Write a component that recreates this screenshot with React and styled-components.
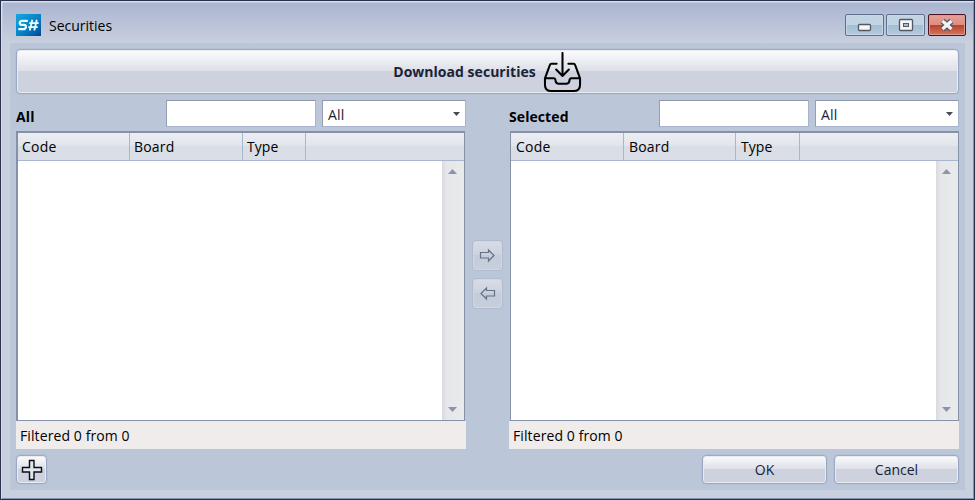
import React from "react";
import styled, { createGlobalStyle, css } from "styled-components";

const Global = createGlobalStyle`
  * { box-sizing: border-box; }
  body { margin: 0; overflow: hidden; background: #2b3349; }
  button, input { font: inherit; margin: 0; padding: 0; }
`;

const Window = styled.div`
  width: 975px;
  height: 500px;
  padding: 0 8px 8px 9px;
  border: 1px solid #29304a;
  background: linear-gradient(#a9b4cf 0, #c8cfde 42px, #c8cfde 100%);
  box-shadow: inset 1px 1px 0 #d9deeb, inset -1px -1px 0 #8294b4, inset 2px 2px 0 #c3cadd;
  font-family: "Open Sans", "Noto Sans", sans-serif;
  font-size: 14px;
  line-height: 20px;
  color: #000;
`;

const TitleBar = styled.header`
  display: flex;
  align-items: flex-start;
  height: 42px;
  margin-right: -1px;
  padding: 12px 0 0 6px;
`;

const Label = styled.span`
  display: inline-block;
  white-space: nowrap;
  letter-spacing: ${(p) => p.$track || 0}px;
  font-weight: ${(p) => (p.$bold ? 700 : 400)};
`;

const Title = styled.h1`
  flex: 1;
  margin: 3px 0 0 8px;
  font-size: inherit;
  font-weight: 400;
  line-height: 20px;
`;

const Logo = styled.svg`
  width: 25px;
  height: 22px;
  margin-top: 1px;
`;

const Controls = styled.div`
  display: flex;
  gap: 2px;
  margin: 1px 1px 0 0;
`;

const ControlButton = styled.button`
  display: block;
  width: 39px;
  height: 22px;
  border: 1px solid #5d708f;
  border-radius: 2px;
  box-shadow: inset 0 0 0 1px #c6d7e7;
  background: linear-gradient(#c2d3e3 0 50%, #a3bdd2 50%, #b4cbdd 100%);
  svg { display: block; width: 37px; height: 20px; }
  ${(p) => p.$close && css`
    border-color: #4c1420;
    width: 38px;
    margin-left: 1px;
    box-shadow: inset 0 0 0 1px #dc998f;
    background: linear-gradient(#e5a197 0, #dc8c80 50%, #b94029 50%, #d4765e 100%);
    svg { width: 36px; }
  `}
`;

const Body = styled.main`
  height: 447px;
  padding: 6px 0 6px 6px;
  width: 955px;
  background: #bbc7d9;
`;

const PushButton = styled.button`
  display: flex;
  align-items: center;
  justify-content: center;
  width: ${(p) => p.$w}px;
  height: ${(p) => p.$h}px;
  border: 1px solid #9ca9c4;
  border-radius: 4px;
  color: #1a2238;
  background: linear-gradient(#fcfcfd 0, #dcdfe7 50%, #cdd2df 50%, #cdd2de 100%);
  box-shadow: inset 0 0 0 1px #e9ebf1, 0 0 0 0.5px #aeb9ce;
  ${(p) => p.$dim && css`
    border-color: #b0bbd0;
    background: linear-gradient(#d8dde7, #cbd1de 50%, #c4cbd9 50%, #c7cedc);
    box-shadow: inset 0 0 0 1px #d1d8e4;
  `}
`;

const Inbox = styled.svg`
  width: 39px;
  height: 41px;
  margin: 1px 0 0 7px;
`;

const Columns = styled.div`
  display: grid;
  grid-template-columns: 450px 43px 450px;
  height: 355px;
`;

const Panel = styled.section`
  padding-top: 6px;
`;

const FilterRow = styled.div`
  display: flex;
  height: 27px;
`;

const Heading = styled.h2`
  width: 150px;
  margin: 7px 0 0;
  font-size: inherit;
  line-height: 20px;
`;

const TextInput = styled.input`
  width: 150px;
  height: 27px;
  border: 1px solid #a9b5cc;
  border-top-color: #8c98ae;
  border-left-color: #929eb5;
  background: #fff;
  outline: none;
`;

const Combo = styled.div`
  display: flex;
  justify-content: space-between;
  width: 144px;
  height: 27px;
  margin-left: 6px;
  padding: 4px 5px 0 5px;
  border: 1px solid #a9b5cc;
  border-top-color: #8c98ae;
  border-left-color: #929eb5;
  background: #fff;
  color: #1a2238;
  svg { width: 7px; height: 4px; margin-top: 7px; }
`;

const Table = styled.div`
  display: flex;
  flex-direction: column;
  width: 449px;
  height: 290px;
  margin: 4px 0 0 ${(p) => (p.$shift ? 1 : 0)}px;
  border: solid #8491a7;
  border-width: 2px 1px 1px ${(p) => (p.$shift ? 1 : 2)}px;
  background: #fff;
`;

const HeaderRow = styled.div`
  display: grid;
  grid-template-columns: ${(p) => p.$cols};
  height: 28px;
  border-bottom: 1px solid #aab6cd;
  background: linear-gradient(#eceef3 0, #e1e4eb 50%, #d9dde6 50%, #d9dee7 100%);
`;

const HeaderCell = styled.div`
  padding: 4px 0 0 ${(p) => p.$pad}px;
  border-right: 1px solid #aab6cd;
  &:last-child { border-right: 0; }
`;

const TableBody = styled.div`
  display: flex;
  flex: 1;
  justify-content: flex-end;
`;

const ScrollBar = styled.div`
  display: flex;
  flex-direction: column;
  justify-content: space-between;
  align-items: center;
  width: 22px;
  padding: 8px 1px 8px 0;
  background: linear-gradient(90deg, #d9dbdf 0, #e6e7e9 5px, #e9eaeb 100%);
  svg { width: 9px; height: 5px; }
`;

const Status = styled.div`
  height: 28px;
  padding: 5px 0 0 4px;
  background: #f0eceb;
`;

const Transfer = styled.div`
  display: flex;
  flex-direction: column;
  gap: 7px;
  padding: 146px 0 0 6px;
`;

const Footer = styled.footer`
  display: flex;
  gap: 7px;
  margin-top: 6px;
  > :nth-child(2) { margin-left: 648px; }
`;

const Glyph = styled.svg`
  display: block;
  width: ${(p) => p.$size}px;
  height: ${(p) => p.$size}px;
  fill: none;
`;

const columns = [["Code", 0.2], ["Board", 0.2], ["Type", 0.05]];

function SecuritiesPanel({ title, track, cols, pad, shift }) {
  return (
    <Panel>
      <FilterRow>
        <Heading><Label $bold $track={track}>{title}</Label></Heading>
        <TextInput aria-label={title} />
        <Combo>
          <Label $track={0.2}>All</Label>
          <svg viewBox="0 0 7 4"><path d="M0 0h7L3.5 4z" fill="#464a54" /></svg>
        </Combo>
      </FilterRow>
      <Table $shift={shift}>
        <HeaderRow $cols={cols}>
          {columns.map(([name, t]) => (
            <HeaderCell key={name} $pad={pad}><Label $track={t}>{name}</Label></HeaderCell>
          ))}
          <HeaderCell />
        </HeaderRow>
        <TableBody>
          <ScrollBar>
            <svg viewBox="0 0 9 5"><path d="M0 5h9L4.5 0z" fill="#8995ad" /></svg>
            <svg viewBox="0 0 9 5"><path d="M0 0h9L4.5 5z" fill="#8995ad" /></svg>
          </ScrollBar>
        </TableBody>
      </Table>
      <Status><Label $track={0.1}>Filtered 0 from 0</Label></Status>
    </Panel>
  );
}

export default function App() {
  return (
    <>
      <Global />
      <Window>
        <TitleBar>
          <Logo viewBox="0 0 25 22">
            <defs>
              <linearGradient id="logo" x1="0" y1="0" x2="1" y2="1">
                <stop offset="0" stopColor="#13a7e1" />
                <stop offset=".55" stopColor="#0880c4" />
                <stop offset="1" stopColor="#034596" />
              </linearGradient>
            </defs>
            <path d="M0 0h25v22H0z" fill="url(#logo)" />
            <g fill="none" stroke="#eaffff" strokeWidth="2.2">
              <path d="M11.8 6.8H6q-2 0-2.3 2Q3.6 10.900 5.600 10.900H8q2.200 0 1.900 2.100-.4 2.200-2.500 2.200H2.300" />
              <path d="M16.300 5.800l-2.500 10.700M20.800 5.800l-2.500 10.700M13.300 9.200h9.400M12.300 13.200h9.400" strokeWidth="1.800" />
            </g>
          </Logo>
          <Title><Label>Securities</Label></Title>
          <Controls>
            <ControlButton aria-label="Minimize">
              <svg viewBox="0 0 37 20"><rect x="12.5" y="9.5" width="12" height="6" rx="1" fill="#f7f7f5" stroke="#525866" strokeWidth="1.300" /></svg>
            </ControlButton>
            <ControlButton aria-label="Maximize">
              <svg viewBox="0 0 37 20">
                <rect x="12.5" y="4.5" width="13" height="11" rx="1" fill="#f7f7f5" stroke="#525866" strokeWidth="1.300" />
                <rect x="16.5" y="8.5" width="5" height="3" fill="#a9bfd8" stroke="#525866" />
              </svg>
            </ControlButton>
            <ControlButton $close aria-label="Close">
              <svg viewBox="0 0 36 20" fill="none">
                <path d="M13.500 6l9 8M22.500 6l-9 8" stroke="#535766" strokeWidth="5.800" />
                <path d="M13.500 6l9 8M22.500 6l-9 8" stroke="#f2f2f3" strokeWidth="3.300" />
              </svg>
            </ControlButton>
          </Controls>
        </TitleBar>
        <Body>
          <PushButton $w={943} $h={45}>
            <Label $bold $track={0.03}>Download securities</Label>
            <Inbox viewBox="0 0 40 42" fill="none" stroke="#000" strokeWidth="2.1" strokeLinecap="round" strokeLinejoin="round">
              <path d="M20 1v23M13.500 18L20 24.500 26.500 18" />
              <path d="M14 12H8.500Q7.500 12 7 13.500L2 27v6.500Q2 40 8.500 40h23Q38 40 38 33.500V27L33 13.500Q32.500 12 31.500 12H26M2 27h9q1.500 0 1.800 2 .4 3.500 3.500 3.500h7.400q3.100 0 3.500-3.500.3-2 1.800-2h9" />
            </Inbox>
          </PushButton>
          <Columns>
            <SecuritiesPanel title="All" track={0.2} cols="112px 113px 63px 1fr" pad={4} />
            <Transfer>
              <PushButton $dim $w={31} $h={31} aria-label="Add">
                <Glyph $size={17} viewBox="0 0 17 17" stroke="#667287" strokeWidth="1.200"><path d="M1.500 5.500h8V3l5.500 5.500L9.500 14v-3h-8z" /></Glyph>
              </PushButton>
              <PushButton $dim $w={31} $h={31} aria-label="Remove">
                <Glyph $size={17} viewBox="0 0 17 17" stroke="#667287" strokeWidth="1.200"><path d="M15.500 5.500H7.500V3L2 8.500 7.500 14v-3h8z" /></Glyph>
              </PushButton>
            </Transfer>
            <SecuritiesPanel title="Selected" track={0.08} cols="113px 112px 64px 1fr" pad={5} shift />
          </Columns>
          <Footer>
            <PushButton $w={31} $h={29} aria-label="New">
              <Glyph $size={22} viewBox="0 0 22 22" stroke="#0b0e14" strokeWidth="1.4"><path d="M8.500 1.500h4.500v7h7.500V13H13v7.500H8.500V13H1.500V8.500h7z" fill="#dfe8ec" /></Glyph>
            </PushButton>
            <PushButton $w={125} $h={29}><Label>OK</Label></PushButton>
            <PushButton $w={125} $h={29}><Label>Cancel</Label></PushButton>
          </Footer>
        </Body>
      </Window>
    </>
  );
}
